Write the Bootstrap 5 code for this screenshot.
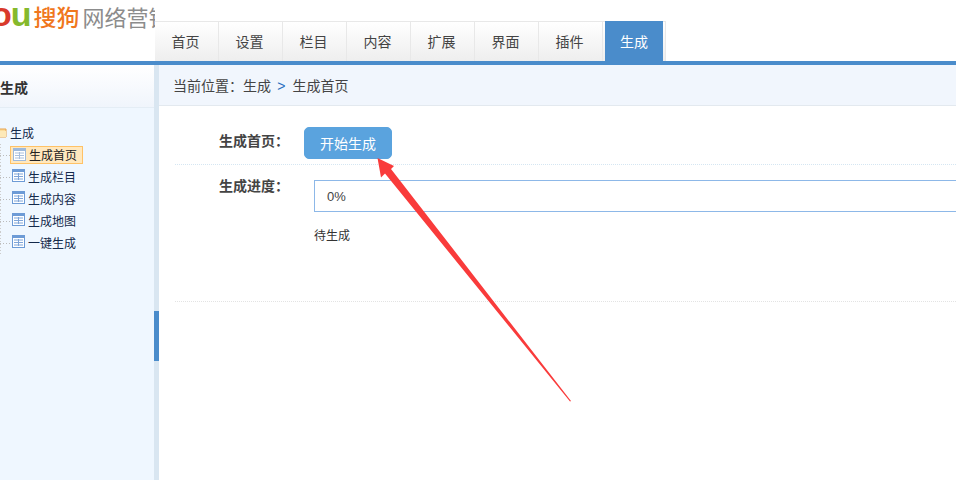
<!DOCTYPE html>
<html lang="zh-CN"><head><meta charset="utf-8"><title>生成</title>
<link href="https://cdn.jsdelivr.net/npm/bootstrap@5.3.0/dist/css/bootstrap.min.css" rel="stylesheet">
<script src="https://cdn.jsdelivr.net/npm/bootstrap@5.3.0/dist/js/bootstrap.bundle.min.js"></script>
<style>
html,body{height:480px;overflow:hidden;background:#fff}
body{font-family:"Noto Sans CJK SC","Liberation Sans",sans-serif;font-size:12px;color:#333;position:relative}
.top-bar{height:61px}
.logo-box{width:155px;height:61px;overflow:hidden;white-space:nowrap;line-height:1;flex:none}
.logo-inner{margin-left:-9px;padding-top:2px;display:flex;align-items:baseline}
.logo-o{font:700 34px/24px "Liberation Sans",sans-serif;color:#d93a2b}
.logo-u{font:700 34px/24px "Liberation Sans",sans-serif;color:#85b92c;margin-left:-1px}
.logo-sg{font-size:23px;font-weight:500;color:#f0771d;margin-left:2px;line-height:24px}
.logo-wl{font-size:22px;color:#8c8c8c;margin-left:3px;line-height:24px}
.tab-strip{margin-top:21px;height:40px;border-top:1px solid #e8e8e8;border-right:1px solid #e8e8e8;padding-right:2px;background:linear-gradient(#fff,#eee)}
.tab-item{width:64px;height:39px;line-height:38px;text-align:center;font-size:14px;color:#444;border-right:1px solid #e8e8e8;padding-right:2px;background:linear-gradient(#fff,#eee)}
.tab-on{width:58px;height:40px;margin-top:-1px;margin-left:2px;line-height:40px;text-align:center;font-size:14px;color:#fff;background:#4a8ccb}
.blue-rule{height:4px;background:#4a8ccb}
.work{height:415px}
.side{width:154px;flex:none;background:#eff7ff;overflow:hidden}
.side-head{height:43px;line-height:44px;font-size:14px;font-weight:700;color:#333;background:linear-gradient(#fff,#f0f5fc);border-bottom:1px solid #e4edf5}
.tree{padding-top:15px;color:#14294a;margin:0;list-style:none}
.tree-root{height:21px;line-height:20px;padding-left:10px;position:relative}
.tree-root svg{position:absolute;left:-7px;top:2px}
.tree-row{height:22px;display:flex;align-items:center;padding-left:12px;background:
  repeating-linear-gradient(90deg,#bbb 0 1px,transparent 1px 3px) 0 50%/12px 1px no-repeat,
  repeating-linear-gradient(180deg,#ccc 0 1px,transparent 1px 3px) 0 0/1px 100% no-repeat}
.tree-row svg{flex:none;margin-right:3px;margin-bottom:3px}
.tree-on{height:18px;margin-left:-2px;padding:0 5px 0 2px;display:flex;align-items:center;background:#ffe8be;border:1px solid #ffc266;color:#222}
.tree-on svg{margin-right:3px;margin-bottom:1px}
.split{width:5px;flex:none;background:#d9e6f1;padding-top:246px}
.grip{height:50px;background:#4a8ccb}
.main{min-width:0;overflow:hidden}
.crumb{height:41px;line-height:40px;padding-left:14px;font-size:14px;color:#444;background:#f1f6fd;border-bottom:1px solid #e3e9ef}
.crumb b{font-weight:400;color:#2a6fc0;font-family:"Liberation Sans",sans-serif;margin:0 4px 0 3px}
.form-zone{margin-left:16px}
.line-a{height:59px;padding-top:21px;border-bottom:1px dotted #d5e6f2}
.line-b{height:137px;padding-top:14px;border-bottom:1px dotted #e3e3e3}
.lbl{width:129px;padding-left:44px;font-size:14px;font-weight:700;color:#444;line-height:24px;flex:none}
.lbl-down{margin-top:1px}
.lbl-up{margin-top:-6px}
.go-btn{width:88px;height:32px;padding:0;font-size:14px;line-height:28px;color:#fff;background:#5aa3de;border:1px solid #5aa3de;border-radius:5px}
.bar-in{width:700px;height:32px;margin-left:10px;margin-top:1px;border:1px solid #8db8e8;padding-left:12px;font:13px/31px "Liberation Sans",sans-serif;color:#444}
.note{margin:14px 0 0 10px;line-height:18px;color:#333}
.mark-arrow{position:absolute;left:0;top:0;pointer-events:none}
</style></head>
<body>
<div class="d-flex top-bar">
  <div class="logo-box"><div class="logo-inner"><span class="logo-o">o</span><span class="logo-u">u</span><span class="logo-sg">搜狗</span><span class="logo-wl">网络营销</span></div></div>
  <nav class="d-flex tab-strip">
    <div class="tab-item">首页</div><div class="tab-item">设置</div><div class="tab-item">栏目</div><div class="tab-item">内容</div><div class="tab-item">扩展</div><div class="tab-item">界面</div><div class="tab-item">插件</div><div class="tab-on">生成</div>
  </nav>
</div>
<div class="blue-rule"></div>
<div class="d-flex work">
  <aside class="side">
    <div class="side-head">生成</div>
    <ul class="tree ps-0">
      <li class="tree-root"><svg width="15" height="13" viewBox="0 0 15 13"><path d="M1 3h5l1 1h6v8H1z" fill="#fbdc9c" stroke="#e8a24a"/><path d="M1 6h12v6H1z" fill="#fde9b8"/></svg>生成</li>
      <li class="tree-row"><span class="tree-on"><svg width="13" height="13" viewBox="0 0 13 13"><rect x=".5" y=".5" width="12" height="12" fill="#fff" stroke="#9db9dc"/><rect x="1" y="1" width="11" height="2" fill="#9db9dc"/><path d="M2 5h9M2 7.5h9M2 10h9M6.5 4v7" stroke="#a9bfdc"/></svg>生成首页</span></li>
      <li class="tree-row"><svg width="13" height="13" viewBox="0 0 13 13"><rect x=".5" y=".5" width="12" height="12" fill="#fff" stroke="#6d9bd6"/><rect x="1" y="1" width="11" height="2" fill="#6d9bd6"/><path d="M2 5h9M2 7.5h9M2 10h9M6.5 4v7" stroke="#7fa5d8"/></svg>生成栏目</li>
      <li class="tree-row"><svg width="13" height="13" viewBox="0 0 13 13"><rect x=".5" y=".5" width="12" height="12" fill="#fff" stroke="#6d9bd6"/><rect x="1" y="1" width="11" height="2" fill="#6d9bd6"/><path d="M2 5h9M2 7.5h9M2 10h9M6.5 4v7" stroke="#7fa5d8"/></svg>生成内容</li>
      <li class="tree-row"><svg width="13" height="13" viewBox="0 0 13 13"><rect x=".5" y=".5" width="12" height="12" fill="#fff" stroke="#6d9bd6"/><rect x="1" y="1" width="11" height="2" fill="#6d9bd6"/><path d="M2 5h9M2 7.5h9M2 10h9M6.5 4v7" stroke="#7fa5d8"/></svg>生成地图</li>
      <li class="tree-row"><svg width="13" height="13" viewBox="0 0 13 13"><rect x=".5" y=".5" width="12" height="12" fill="#fff" stroke="#6d9bd6"/><rect x="1" y="1" width="11" height="2" fill="#6d9bd6"/><path d="M2 5h9M2 7.5h9M2 10h9M6.5 4v7" stroke="#7fa5d8"/></svg>一键生成</li>
    </ul>
  </aside>
  <div class="split"><div class="grip"></div></div>
  <main class="main flex-grow-1">
    <div class="crumb">当前位置：生成 <b>&gt;</b> 生成首页</div>
    <div class="form-zone">
      <div class="d-flex line-a"><div class="lbl lbl-down">生成首页：</div><button type="button" class="btn go-btn">开始生成</button></div>
      <div class="d-flex line-b"><div class="lbl lbl-up">生成进度：</div><div><div class="bar-in">0%</div><p class="note">待生成</p></div></div>
    </div>
  </main>
</div>
<svg class="mark-arrow" width="956" height="480" viewBox="0 0 956 480"><polygon points="377.5,158 394,166 391,169 571,401 570,401.5 385,173.5 381,177.5" fill="#f93b3b"/></svg>
</body></html>
